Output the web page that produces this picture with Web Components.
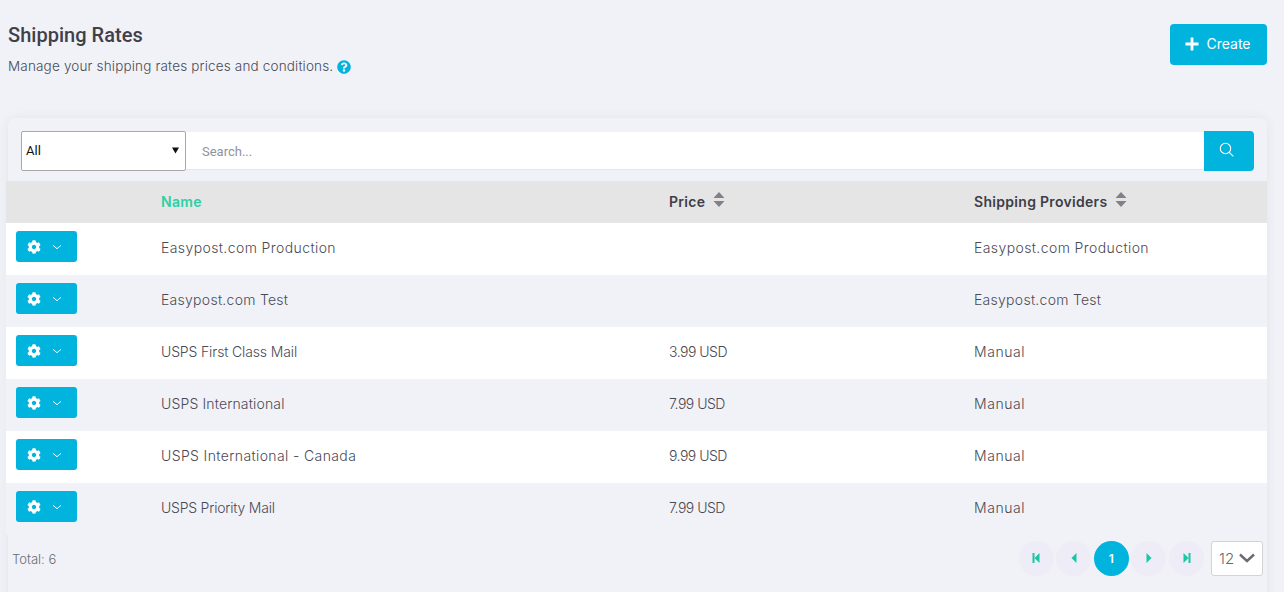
<!DOCTYPE html>
<html><head><meta charset="utf-8">
<style>
html,body{margin:0;padding:0;background:#f1f2f7;height:592px;overflow:hidden}
body{font-family:Inter,"Open Sans",sans-serif;color:#4a4a55}
</style></head><body>
<rates-page>
  <page-head slot="head" title-text="Shipping Rates" sub="Manage your shipping rates prices and conditions."></page-head>
  <rates-card>
    <search-bar></search-bar>
    <rates-table>
      <rate-row name="Easypost.com Production" ns=".4" price="" provider="Easypost.com Production"></rate-row>
      <rate-row alt name="Easypost.com Test" ns=".27" price="" provider="Easypost.com Test"></rate-row>
      <rate-row name="USPS First Class Mail" ns="-.14" price="3.99 USD" provider="Manual"></rate-row>
      <rate-row alt name="USPS International" ns=".15" price="7.99 USD" provider="Manual"></rate-row>
      <rate-row name="USPS International - Canada" ns=".38" price="9.99 USD" provider="Manual"></rate-row>
      <rate-row alt name="USPS Priority Mail" ns="-.22" price="7.99 USD" provider="Manual"></rate-row>
    </rates-table>
    <pager-bar total="6"></pager-bar>
  </rates-card>
</rates-page>
<script>
const COG='M487.4 315.7l-42.6-24.6c4.3-23.2 4.3-47 0-70.2l42.6-24.6c4.9-2.8 7.1-8.6 5.5-14-11.1-35.6-30-67.8-54.7-94.6-3.8-4.1-10-5.1-14.8-2.3L380.8 110c-17.9-15.4-38.5-27.3-60.8-35.1V25.8c0-5.6-3.9-10.5-9.4-11.7-36.7-8.2-74.3-7.8-109.2 0-5.5 1.2-9.4 6.1-9.4 11.7V75c-22.2 7.9-42.8 19.8-60.8 35.1L88.7 85.5c-4.9-2.8-11-1.9-14.8 2.3-24.7 26.7-43.6 58.9-54.7 94.6-1.7 5.4.6 11.2 5.5 14L67.3 221c-4.3 23.2-4.3 47 0 70.2l-42.6 24.6c-4.9 2.8-7.1 8.6-5.5 14 11.1 35.6 30 67.8 54.7 94.6 3.8 4.1 10 5.1 14.8 2.3l42.6-24.6c17.9 15.4 38.5 27.3 60.8 35.1v49.2c0 5.6 3.9 10.5 9.4 11.7 36.7 8.2 74.3 7.8 109.2 0 5.5-1.2 9.4-6.1 9.4-11.7v-49.2c22.2-7.9 42.8-19.8 60.8-35.1l42.6 24.6c4.9 2.8 11 1.9 14.8-2.3 24.7-26.7 43.6-58.9 54.7-94.6 1.5-5.5-.7-11.3-5.6-14.1zM256 336c-44.1 0-80-35.9-80-80s35.9-80 80-80 80 35.9 80 80-35.9 80-80 80z';
const Q='M504 256c0 136.997-111.043 248-248 248S8 392.997 8 256C8 119.083 119.043 8 256 8s248 111.083 248 248zM262.655 90c-54.497 0-89.255 22.957-116.549 63.758-3.536 5.286-2.353 12.415 2.715 16.258l34.699 26.31c5.205 3.947 12.621 3.008 16.665-2.122 17.864-22.658 30.113-35.797 57.303-35.797 20.429 0 45.698 13.148 45.698 32.958 0 14.976-12.363 22.667-32.534 33.976C247.128 238.528 216 254.941 216 296v4c0 6.627 5.373 12 12 12h56c6.627 0 12-5.373 12-12v-1.333c0-28.462 83.186-29.647 83.186-106.667 0-58.002-60.165-102-116.531-102zM256 338c-25.365 0-46 20.635-46 46 0 25.364 20.635 46 46 46s46-20.636 46-46c0-25.365-20.635-46-46-46z';
function def(tag,build){customElements.define(tag,class extends HTMLElement{constructor(){super();this.attachShadow({mode:'open'})}connectedCallback(){this.shadowRoot.innerHTML=build(this)}})}
def('rates-page',()=>`<style>:host{display:block;height:592px;overflow:hidden}</style><slot name="head"></slot><slot></slot>`);
def('page-head',h=>`<style>
:host{display:flex;justify-content:space-between;align-items:flex-start;padding:24px 17px 0 8px;height:118px;box-sizing:border-box}
h1{font:500 20px/23px Roboto,sans-serif;color:#3f4049;margin:0;letter-spacing:.03px}
p{display:flex;align-items:center;gap:4px;margin:10px 0 0;font:300 13.5px/19px Inter,sans-serif;letter-spacing:.17px;color:#4a4a55}
svg{width:14px;height:14px;fill:#00b4de}
a{display:flex;align-items:center;justify-content:center;gap:7px;width:97px;height:41px;padding:0 1px 2px 0;background:#00b4de;border-radius:4px;color:#fff;font:400 14px Inter,sans-serif;box-sizing:border-box}
a svg{width:14px;height:14px;fill:#fff}
</style><div><h1>${h.getAttribute('title-text')}</h1><p>${h.getAttribute('sub')}<svg viewBox="0 0 512 512"><path d="${Q}"/></svg></p></div>
<a><svg viewBox="0 0 14 14"><path d="M5.6 0.5h2.8v5.1h5.1v2.8H8.4v5.1H5.6V8.4H.5V5.6h5.1z"/></svg>Create</a>`);
def('rates-card',()=>`<style>:host{display:block;margin-left:8px;width:1259px;height:490px;background:#f1f2f7;border-radius:8px;box-shadow:0 0 12px rgba(60,60,90,.07)}</style><slot></slot>`);
def('search-bar',()=>`<style>
:host{display:flex;align-items:center;padding:13px 13px 10px;height:40px}
.w{position:relative;display:flex}
select{appearance:none;width:165px;height:40px;box-sizing:border-box;border:1px solid #a9a9ad;border-radius:2px;background:#fff;font:400 13px Roboto,sans-serif;color:#111;padding:0 0 2px 4px}
.w svg{position:absolute;right:7px;top:16px;width:7px;height:7px;fill:#111;stroke:none}
input{flex:1;min-width:0;height:38px;box-sizing:border-box;border:0;border-bottom:1px solid #e6e7ec;background:#fff;padding:2px 16px 0;font:400 13px Roboto,sans-serif;outline:0}
input::placeholder{color:#8f939c;opacity:1}
button{width:50px;height:40px;border:0;background:#00b4de;border-radius:0 4px 4px 0;padding:0 6px 4px 0;display:flex;align-items:center;justify-content:center}
button svg{width:15px;height:15px;fill:none;stroke:#fff;stroke-width:1.1}
</style><div class="w"><select><option>All</option></select><svg viewBox="0 0 7 7"><path d="M0 .5h7L3.5 6.5z"/></svg></div><input placeholder="Search..."><button><svg viewBox="0 0 15 15"><circle cx="6.5" cy="6.5" r="5.2"/><path d="M10.3 10.3l4 4"/></svg></button>`);
const sortIcon=`<svg viewBox="0 0 12 15" width="12" height="15"><path fill="#808086" d="M6 0l5.5 6H.5zM6 15L.5 9h11z"/></svg>`;
def('rates-table',()=>`<style>
:host{display:block;margin:0 0 0 -2px;width:1261px}
.h{display:grid;grid-template-columns:155px 508px 305px 1fr;height:42px;box-sizing:border-box;padding-bottom:2px;align-items:center;background:#e5e5e5;font:600 14px Inter,sans-serif;letter-spacing:.3px;color:#3d3e47}
.h span{display:flex;align-items:center;gap:8px}
.h span:nth-child(2){color:#2bd1a3}
.h svg{margin-top:-3px}
</style><div class="h"><span></span><span>Name</span><span>Price ${sortIcon}</span><span>Shipping Providers ${sortIcon}</span></div><slot></slot>`);
def('rate-row',r=>`<style>
:host{display:grid;grid-template-columns:155px 508px 305px 1fr;height:52px;align-items:center;background:${r.hasAttribute('alt')?'#f1f2f7':'#fff'};font:300 14px Inter,sans-serif;color:#4a4a55}
.b{margin-left:10px;width:61px;height:31px;background:#00b4de;border-radius:3px;display:flex;align-items:center;gap:11px;padding:2px 0 0 11px;box-sizing:border-box;margin-top:-6px}
.g{width:14px;height:14px;fill:#fff}
.c{width:10px;height:10px;fill:none;stroke:#fff;stroke-width:1}
span{padding-bottom:4px}
.n{letter-spacing:${r.getAttribute('ns')}px}
.pr{letter-spacing:-.5px}
.pv{letter-spacing:${r.getAttribute('provider')=='Manual'?'.55':r.getAttribute('ns')}px}
</style><div><div class="b"><svg class="g" viewBox="0 0 512 512"><path d="${COG}"/></svg><svg class="c" viewBox="0 0 10 10"><path d="M1 3.3l4 3.4 4-3.4"/></svg></div></div><span class="n">${r.getAttribute('name')}</span><span class="pr">${r.getAttribute('price')}</span><span class="pv">${r.getAttribute('provider')}</span>`);
const pg=(d)=>`<a><svg viewBox="0 0 10 10" width="10" height="10"><path fill="#17c8a4" d="${d}"/></svg></a>`;
def('pager-bar',p=>`<style>
:host{display:flex;align-items:center;height:48px;padding:0 4px 2px 4px;box-sizing:border-box}
.t{flex:1;margin-top:2px;font:300 13px Inter,sans-serif;color:#6a6b73}
.p{display:flex;gap:2.6px;margin-right:7px}
a{width:35px;height:35px;border-radius:50%;background:#edecf7;display:flex;align-items:center;justify-content:center;font:600 12px Inter,sans-serif;color:#fff}
a.on{background:#00b4de}
.s{width:52px;height:35px;box-sizing:border-box;border:1px solid #d3d4d8;border-radius:3px;background:#fff;display:flex;align-items:center;justify-content:space-between;padding:0 7px;font:300 15px Inter,sans-serif;color:#66676f}
</style><div class="t">Total: ${p.getAttribute('total')}</div><div class="p">
${pg('M1.5 0h2v10h-2zM8.5 0v10L3.5 5z')}${pg('M7.5 0v10L2.5 5z')}<a class="on">1</a>${pg('M2.5 0v10l5-5z')}${pg('M1.5 0v10l5-5zM6.5 0h2v10h-2z')}
</div><div class="s">12<svg viewBox="0 0 16 10" width="16" height="10" fill="none" stroke="#6b6c74" stroke-width="2.4"><path d="M1 1.5l7 6.5 7-6.5"/></svg></div>`);
</script>
</body></html>
